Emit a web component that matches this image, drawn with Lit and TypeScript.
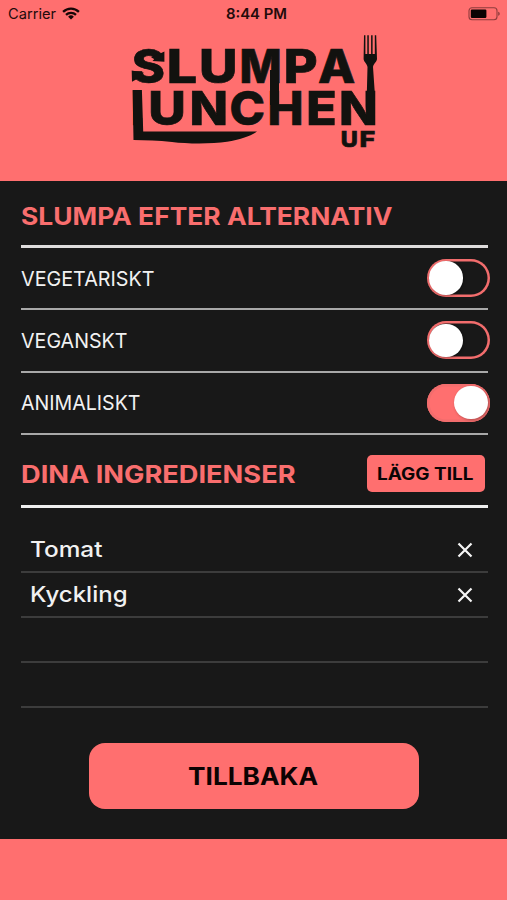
import { LitElement, html, css, svg } from "lit";
import { customElement, property, state } from "lit/decorators.js";

/** Single line of capitals-aligned text set to an exact measure. */
@customElement("fit-text")
class FitText extends LitElement {
  @property() text = "";
  @property({ type: Number }) width = 100;
  @property({ type: Number }) size = 16;
  @property({ type: Number }) weight = 400;

  static styles = css`
    :host { display: block; flex: none; }
    .line { display: block; overflow: visible; fill: currentColor; font-family: Inter, "Open Sans", sans-serif; }
  `;

  render() {
    const cap = this.size * 0.727;
    return html`<svg class="line" width=${this.width} height=${cap}>
      <text x="0" y=${cap + 0.5} font-size=${this.size} font-weight=${this.weight}
        textLength=${this.width} lengthAdjust="spacingAndGlyphs">${this.text}</text>
    </svg>`;
  }
}

@customElement("toggle-switch")
class ToggleSwitch extends LitElement {
  @property({ type: Boolean, reflect: true }) on = false;

  static styles = css`
    :host { display: block; flex: none; margin-right: -2.5px; }
    .track {
      box-sizing: border-box; width: 63px; height: 38px; border-radius: 19px; padding: 0 2.3px;
      box-shadow: inset 0 0 0 2.5px #f26d6d; display: flex; align-items: center; overflow: hidden;
    }
    .knob {
      width: 33.5px; height: 33.5px; border-radius: 50%; background: #fff;
      box-shadow: 1px 1px 3px rgba(0, 0, 0, 0.3);
    }
    :host([on]) .track { background: #ff6f6f; justify-content: flex-end; }
  `;

  render() {
    return html`<div class="track" role="switch" aria-checked=${this.on}><div class="knob"></div></div>`;
  }
}

/** Advance width and side bearings of the logo capitals, in ems. */
const METRICS: Record<string, [number, number, number]> = {
  S: [0.66, 0.04, 0.04],
  L: [0.59, 0.062, 0.03],
  U: [0.75, 0.058, 0.058],
  M: [0.93, 0.062, 0.062],
  P: [0.67, 0.062, 0.035],
  A: [0.77, 0.018, 0.018],
  N: [0.78, 0.062, 0.062],
  C: [0.75, 0.043, 0.04],
  H: [0.77, 0.062, 0.062],
  E: [0.63, 0.062, 0.04],
  F: [0.61, 0.062, 0.035],
};

type Glyph = [string, number, number];

const TOP: Glyph[] = [["S", 133.8, 163], ["L", 170, 195.6], ["U", 202, 234.5], ["M", 242.3, 278.8], ["P", 287, 316], ["A", 319, 354.5]];
const MIDDLE: Glyph[] = [["L", 133.2, 141.8], ["U", 151.2, 183], ["N", 192.6, 225], ["C", 231.6, 263.2], ["H", 270.3, 300.5], ["E", 309.3, 334.8], ["N", 342, 374.6]];
const BOTTOM: Glyph[] = [["U", 342.2, 356.6], ["F", 361.2, 374.4]];

@customElement("brand-logo")
class BrandLogo extends LitElement {
  static styles = css`
    :host { display: block; }
    .logo { display: block; fill: #12120f; stroke: #12120f; font-family: Inter, sans-serif; font-weight: 800; }
    .letters { stroke-width: 0.7px; }
    .shapes { stroke: none; }
  `;

  private row(glyphs: Glyph[], size: number, y: number) {
    return svg`<text y=${y} font-size=${size}>${glyphs.map(([c, left, right]) => {
      const [adv, lsb, rsb] = METRICS[c];
      const em = (right - left) / (adv - lsb - rsb);
      return svg`<tspan x=${left - lsb * em} textLength=${adv * em} lengthAdjust="spacingAndGlyphs">${c}</tspan>`;
    })}</text>`;
  }

  render() {
    return html`<svg class="logo" width="270" height="130" viewBox="120 25 270 130" role="img">
      <g class="letters">
        ${this.row(TOP, 46.2, 82.5)}
        ${this.row(MIDDLE, 47, 124.5)}
        ${this.row(BOTTOM, 21.8, 146.6)}
      </g>
      <g class="shapes">
        <path d="M151 57.5 L159 54 L164.4 51.6 L164.4 61.8 L152.5 61 L154.5 59 Z" />
        <path d="M131.7 70.5 L144 72.8 L141 75.5 L143 78 L137 79 L132 81.8 Z" />
        <rect x="270" y="70" width="9" height="35" />
        <path d="M132.6 90 H141.9 L143.2 131.4 H257 C251 136 240 139.5 227 141.8 C212 144 188 144 172 142 C158 140.6 146 140.2 133.5 140 Z" />
        <path d="M364 35.2 H365.4 V54 H367.3 V35.2 H368.8 V54 H371.1 V35.2 H372.6 V54 H374.8 V35.2 H376.2 L377 59 C376.8 62 373.5 63.5 373 67 L375 96 V124.7 H366 L367.5 67 C367 63.5 363.8 62 363.6 59 Z" />
      </g>
    </svg>`;
  }
}

@customElement("app-root")
class AppRoot extends LitElement {
  @state() private options = [
    { name: "VEGETARISKT", width: 133.5, on: false },
    { name: "VEGANSKT", width: 106.5, on: false },
    { name: "ANIMALISKT", width: 119.5, on: true },
  ];
  @state() private ingredients = [
    { name: "Tomat", width: 72.5 },
    { name: "Kyckling", width: 97.5 },
    null,
    null,
  ];

  static styles = css`
    :host { display: flex; flex-direction: column; height: 900px; background: #ff6f6f; overflow: hidden; }
    .header { height: 181px; flex: none; display: flex; flex-direction: column; }
    .status {
      height: 25px; flex: none; display: grid; grid-template-columns: 1fr auto 1fr;
      align-items: center; padding: 2px 6px 0 8px; box-sizing: border-box; color: #230b0b;
    }
    .carrier { display: flex; align-items: center; gap: 6px; }
    .time { margin-left: 3px; }
    .battery { justify-self: end; display: block; }
    .brand { margin-left: 120px; }
    .main {
      height: 657.5px; flex: none; box-sizing: border-box; background: #181818;
      padding: 0 19.5px 0 20.5px; display: flex; flex-direction: column; color: #f1f1f1;
    }
    .heading, .option, .item { display: flex; align-items: center; justify-content: space-between; box-sizing: border-box; }
    .heading { color: #f96e6e; flex: none; }
    .first { height: 67px; padding-top: 6px; border-bottom: 3px solid #dedcdc; }
    .second { height: 73.5px; padding: 7px 3px 0 0; border-bottom: 3px solid #efefef; }
    .option { height: 62.3px; flex: none; border-bottom: 2px solid #a8a8a8; }
    .add {
      width: 118px; height: 37px; border: 0; border-radius: 5px; padding: 0 0 1px; background: #ff6f6f;
      color: #0c0505; display: flex; align-items: center; justify-content: center;
    }
    .list { margin-top: 20px; }
    .item { height: 45px; border-bottom: 2px solid #3c3c3c; padding: 0 15px 0 9.5px; }
    .name { margin-bottom: 1.5px; }
    .cross { display: block; stroke: #f5f5f5; stroke-width: 2.2; fill: none; }
    .back {
      width: 329.5px; height: 66px; margin: 34.5px auto 0; border: 0; border-radius: 16px; padding: 0 2px 0 0;
      background: #ff6f6f; color: #0c0303; display: flex; align-items: center; justify-content: center;
    }
  `;

  render() {
    return html`
      <div class="header">
        <div class="status">
          <div class="carrier">
            <fit-text text="Carrier" width="48" size="14.3" weight="400"></fit-text>
            <svg width="18" height="13" viewBox="0 0 18 13" fill="none" stroke="#160606" stroke-width="2.3">
              <path d="M1.1 4.8 A11.4 11.4 0 0 1 16.9 4.8" />
              <path d="M4 7.9 A7.2 7.2 0 0 1 14 7.9" />
              <path d="M9 12.6 L6.1 9.8 A4.1 4.1 0 0 1 11.9 9.8 Z" fill="#160606" stroke="none" />
            </svg>
          </div>
          <fit-text class="time" text="8:44 PM" width="61" size="14.3" weight="600"></fit-text>
          <svg class="battery" width="33" height="14" viewBox="0 0 33 14">
            <rect x="1" y="0.8" width="28" height="12" rx="3" fill="none" stroke="#8f3c3c" stroke-width="1.1" />
            <rect x="2.8" y="2.6" width="15.6" height="8.4" rx="1.2" fill="#0b0202" />
            <path d="M30.2 4.8 C32.2 5.3 32.2 8.3 30.2 8.8 Z" fill="#8f3c3c" />
          </svg>
        </div>
        <brand-logo class="brand"></brand-logo>
      </div>
      <div class="main">
        <div class="heading first">
          <fit-text text="SLUMPA EFTER ALTERNATIV" width="371.5" size="24" weight="700"></fit-text>
        </div>
        ${this.options.map(
          (o) => html`<div class="option">
            <fit-text .text=${o.name} .width=${o.width} size="20.2" weight="400"></fit-text>
            <toggle-switch ?on=${o.on}></toggle-switch>
          </div>`
        )}
        <div class="heading second">
          <fit-text text="DINA INGREDIENSER" width="274.5" size="24" weight="700"></fit-text>
          <button class="add"><fit-text text="LÄGG TILL" width="96.5" size="16.8" weight="700"></fit-text></button>
        </div>
        <div class="list">
          ${this.ingredients.map(
            (i) => html`<div class="item">
              ${i
                ? html`<fit-text class="name" .text=${i.name} .width=${i.width} size="21.8" weight="500"></fit-text>
                    <svg class="cross" width="16" height="16" viewBox="0 0 16 16"><path d="M1.5 1.5 L14.5 14.5 M14.5 1.5 L1.5 14.5" /></svg>`
                : ""}
            </div>`
          )}
        </div>
        <button class="back"><fit-text text="TILLBAKA" width="130" size="24" weight="700"></fit-text></button>
      </div>
    `;
  }
}
